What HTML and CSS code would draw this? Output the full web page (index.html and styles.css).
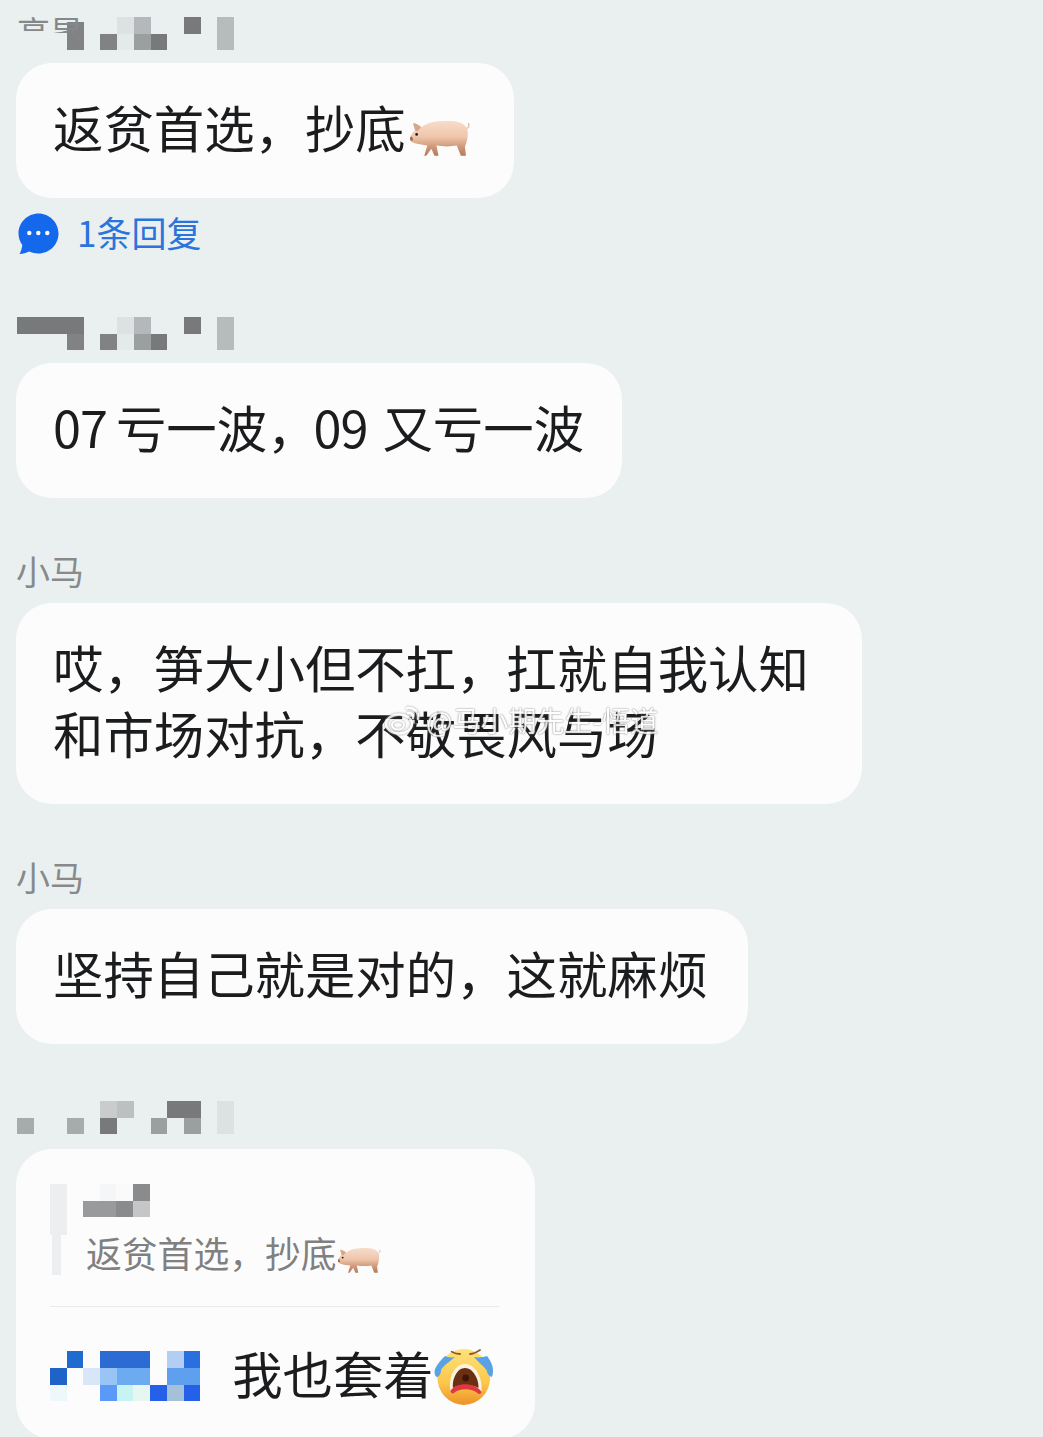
FILE: index.html
```html
<!DOCTYPE html>
<html lang="zh-CN">
<head>
<meta charset="utf-8">
<title>群聊</title>
<link rel="stylesheet" href="styles.css">
</head>
<body>
<svg class="defs" width="0" height="0" aria-hidden="true">
  <defs>
    <linearGradient id="pigBody" x1="0" y1="0" x2="0" y2="1">
      <stop offset="0" stop-color="#f6dcca"/>
      <stop offset=".45" stop-color="#f0c6ac"/>
      <stop offset=".72" stop-color="#d29c7c"/>
      <stop offset="1" stop-color="#b27a5c"/>
    </linearGradient>
    <linearGradient id="faceFill" x1="0" y1="0" x2="0" y2="1">
      <stop offset="0" stop-color="#fde27a"/>
      <stop offset=".6" stop-color="#fbc84c"/>
      <stop offset="1" stop-color="#ee9228"/>
    </linearGradient>
    <symbol id="pig" viewBox="0 0 60 40">
      <path fill="url(#pigBody)" d="M1 19C2 16 4 14 6 12L4 5C7 5 10 7 12 9 17 5 24 3 32 3 42 2 54 3 57 10 59 16 57 24 55 28L56 37 51 37 47 27C42 28 33 28 27 27L29 37 25 37 22 30 17 37 15 37 18 27C14 26 10 26 7 25 4 24 0 23 1 19Z"/>
      <path fill="#d9a58a" d="M4 5C7 5 10 7 12 9L8 13 6 12Z"/>
      <path fill="#9c6248" d="M1 19 3 18 4 22 1.500 22Z"/>
      <circle cx="7.500" cy="16" r="1.300" fill="#221510"/>
      <path fill="none" stroke="#dcb8a2" stroke-width="1.300" d="M57 10C59.500 9 59.500 6 58 5"/>
    </symbol>
  </defs>
</svg>

<main class="feed">
  <section class="msg">
    <div class="mosaic gray">
      <i></i><i></i><i></i><i class="t-cut"></i><i></i><i></i><i class="t-l1"></i><i class="t-m1"></i><i></i><i></i><i class="t-d1"></i><i></i><i class="t-m2"></i>
      <i></i><i></i><i></i><i class="t-d2"></i><i></i><i class="t-d2"></i><i class="t-l2"></i><i class="t-m3"></i><i class="t-d1"></i><i></i><i></i><i></i><i class="t-m2"></i>
      <span class="name-cut">高昇</span>
    </div>
    <div class="bubble b-first">返贫首选，抄底<svg class="pig"><use href="#pig"/></svg></div>
    <div class="replies">
      <svg class="reply-icon" viewBox="0 0 42 42">
        <path fill="#1468ec" d="M20.500.5C31.500.5 40.500 9.500 40.500 20.500S31.500 40.500 20.500 40.500C17 40.500 14 39.800 11 38.500 8 40 5 41 1.500 41 3 38.500 4 35 4.300 32 2 29 .5 25 .5 20.500.5 9.500 9.500.5 20.500.5Z"/>
        <circle cx="11.300" cy="20" r="2.200" fill="#fff"/><circle cx="20.300" cy="20" r="2.200" fill="#fff"/><circle cx="29.300" cy="20" r="2.200" fill="#fff"/>
      </svg>
      <span class="reply-text">1条回复</span>
    </div>
  </section>

  <section class="msg">
    <div class="mosaic gray">
      <i class="t-d1"></i><i class="t-d1"></i><i class="t-d1"></i><i class="t-d1"></i><i></i><i></i><i class="t-l1"></i><i class="t-m1"></i><i></i><i></i><i class="t-d1"></i><i></i><i class="t-m2"></i>
      <i></i><i></i><i></i><i class="t-d2"></i><i></i><i class="t-d2"></i><i class="t-l2"></i><i class="t-m3"></i><i class="t-d1"></i><i></i><i></i><i></i><i class="t-m2"></i>
    </div>
    <div class="bubble b-second"><span class="num">07</span>亏一波，<span class="num num-tight">09</span>又亏一波</div>
  </section>

  <section class="msg">
    <div class="name">小马</div>
    <div class="bubble b-third">哎，笋大小但不扛，扛就自我认知<br>和市场对抗，不敬畏风与场</div>
  </section>

  <section class="msg">
    <div class="name">小马</div>
    <div class="bubble b-fourth">坚持自己就是对的，这就麻烦</div>
  </section>

  <section class="msg msg-last">
    <div class="mosaic gray">
      <i></i><i></i><i></i><i></i><i></i><i class="t-l3"></i><i class="t-m4"></i><i></i><i></i><i class="t-d1"></i><i class="t-d1"></i><i></i><i class="t-l1"></i>
      <i class="t-m5"></i><i></i><i></i><i class="t-m5"></i><i></i><i class="t-d1"></i><i></i><i></i><i class="t-m3"></i><i></i><i class="t-m3"></i><i></i><i class="t-l1"></i>
    </div>
    <div class="bubble b-fifth">
      <div class="quote">
        <div class="quote-bar"><b class="bar-wide"></b><b class="bar-thin"></b></div>
        <div class="quote-body">
          <div class="mosaic mosaic-small">
            <i></i><i class="t-f1"></i><i class="t-f2"></i><i class="t-q1"></i>
            <i class="t-q2"></i><i class="t-q2"></i><i class="t-q1"></i><i class="t-q3"></i>
          </div>
          <div class="quote-text">返贫首选，抄底<svg class="pig pig-small"><use href="#pig"/></svg></div>
        </div>
      </div>
      <div class="sub-reply">
        <div class="mosaic mosaic-blue">
          <i></i><i class="u-1"></i><i></i><i class="u-2"></i><i class="u-2"></i><i class="u-2"></i><i></i><i class="u-3"></i><i class="u-4"></i>
          <i class="u-5"></i><i></i><i class="u-6"></i><i class="u-7"></i><i class="u-8"></i><i class="u-8"></i><i></i><i class="u-9"></i><i class="u-9"></i>
          <i class="u-10"></i><i></i><i></i><i class="u-11"></i><i class="u-12"></i><i class="u-13"></i><i class="u-14"></i><i class="u-15"></i><i class="u-14"></i>
        </div>
        <div class="sub-text">我也套着<svg class="cry" viewBox="0 0 60 60">
          <ellipse cx="29.800" cy="30" rx="26.500" ry="28" fill="url(#faceFill)"/>
          <path fill="none" stroke="#8a5a24" stroke-width="1.800" stroke-linecap="round" d="M17.700 4.700C20 6 23 7 26 7M36 7C39 7 43 5 46 3"/>
          <path fill="#5aa2e6" d="M21 10C17 11 13 10 11 9 7 13 3 17 1 22 0 26 1 29 2.700 30 5 30 7 27 7 23 9 19 14 16 21 10Z"/>
          <path fill="#5aa2e6" d="M40 10C45 11 50 10 53 9 56 13 59 18 59 23 59 26 59 28 57.700 30 55 29 53 27 53 24 50 19 45 16 40 10Z"/>
          <path fill="#fbf3e0" d="M31 17C41 17 49 30 47.500 45 40 38 23 38 16.500 44 14 30 21 17 31 17Z"/>
          <path fill="#6b2f12" d="M31 21C39 21 45 32 44.500 41 38 37 24 37 19 41 18 32 23 21 31 21Z"/>
          <circle cx="31.700" cy="31" r="3.400" fill="#3d1608"/>
          <path fill="#e0363f" d="M16.500 44C22 35 41 35 47.500 45 47 47 45.500 47.500 44 46.500 38 41 25 41 20 46 18.500 47 17 46 16.500 44Z"/>
        </svg></div>
      </div>
    </div>
  </section>
</main>

<div class="watermark">
  <svg class="wm-logo" viewBox="0 0 36 30">
    <ellipse cx="14" cy="19" rx="13" ry="9.500" fill="none" stroke="#fff" stroke-width="2.500"/>
    <ellipse cx="13" cy="20" rx="6" ry="4.500" fill="none" stroke="#fff" stroke-width="2"/>
    <path fill="none" stroke="#fff" stroke-width="2.500" stroke-linecap="round" d="M22 3C29 2 34 7 33 14M23 8C26 7 29 10 28 13"/>
  </svg>
  <span class="wm-text">@马小期先生-悟道</span>
</div>
</body>
</html>
```
FILE: styles.css
```css
* {
  box-sizing: border-box;
}

html,
body {
  margin: 0;
  height: 1437px;
  overflow: hidden;
}

body {
  position: relative;
  background: #eaf0f0;
  color: #1b1c1e;
  font-family: "Noto Sans CJK SC", "Noto Sans", sans-serif;
}

.defs {
  position: absolute;
}

.feed {
  display: flex;
  flex-direction: column;
  gap: 57px;
  padding: 17px 0 0 16px;
}

.msg {
  display: flex;
  flex-direction: column;
  align-items: flex-start;
}

/* Censored names: pixel mosaics */
.mosaic {
  position: relative;
  display: grid;
  grid-template-columns: repeat(13, 16.7px);
  grid-auto-rows: 16.7px;
}

.mosaic i {
  display: block;
}

.gray {
  margin: 0 0 12.6px 1px;
}

.msg-last .gray {
  margin-bottom: 14.6px;
}

.mosaic-small {
  grid-template-columns: repeat(4, 16.7px);
}

.mosaic-blue {
  flex: none;
  margin-top: 11px;
  grid-template-columns: repeat(9, 16.7px);
}

.name-cut {
  position: absolute;
  left: 0;
  top: -2px;
  width: 66px;
  height: 18px;
  overflow: hidden;
  font-size: 33px;
  line-height: 32px;
  color: #85888a;
}

.t-cut { background: linear-gradient(#eaf0f0 0 30%, #808284 30%); }
.t-d1 { background: #77797b; }
.t-d2 { background: #808284; }
.t-l1 { background: #dde1e2; }
.t-l2 { background: #e4e9ea; }
.t-l3 { background: #c9cbcd; }
.t-m1 { background: #b4b8ba; }
.t-m2 { background: #b8bbbc; }
.t-m3 { background: #9c9fa0; }
.t-m4 { background: #bdc0c1; }
.t-m5 { background: #a8abac; }
.t-f1 { background: #f5f6f7; }
.t-f2 { background: #fafafb; }
.t-q1 { background: #8a8b8d; }
.t-q2 { background: #999a9b; }
.t-q3 { background: #c5c6c7; }

.u-1 { background: #1f6bd0; }
.u-2 { background: #2b6bd3; }
.u-3 { background: #b3cdf5; }
.u-4 { background: #2a6fe0; }
.u-5 { background: #1f63c8; }
.u-6 { background: #d8e6f7; }
.u-7 { background: #98c5f5; }
.u-8 { background: #6dabf0; }
.u-9 { background: #5fa0ee; }
.u-10 { background: #eef7fc; }
.u-11 { background: #5b99f8; }
.u-12 { background: #c8f3f5; }
.u-13 { background: #e6f7f0; }
.u-14 { background: #2460e8; }
.u-15 { background: #a6c0d8; }

.name {
  height: 33px;
  margin: 0 0 15px;
  font-size: 34px;
  line-height: 31px;
  color: #88898a;
}

.bubble {
  padding: 31.5px 37px 37.5px;
  border-radius: 36px;
  background: #fcfcfc;
  font-size: 50.4px;
  line-height: 66px;
  white-space: nowrap;
}

.b-first { width: 498px; }
.b-second { width: 606px; }
.b-third { width: 846px; }
.b-fourth { width: 732px; }

.b-fifth {
  width: 519px;
  padding: 35px 36px 32px 34px;
}

.num {
  margin-right: 9px;
  letter-spacing: -1px;
}

.num-tight {
  margin-left: -4px;
  margin-right: 15px;
}

.pig {
  width: 61px;
  height: 41px;
  margin-left: 3px;
  vertical-align: -11px;
}

.pig-small {
  width: 44px;
  height: 29px;
  margin-left: 0;
  vertical-align: -7px;
}

.replies {
  display: flex;
  align-items: center;
  gap: 17px;
  height: 41px;
  margin: 16px 0 5px 2px;
}

.reply-icon {
  width: 42px;
  height: 42px;
}

.reply-text {
  margin-bottom: 5px;
  font-size: 35px;
  line-height: 41px;
  color: #2a74dc;
}

.quote {
  display: flex;
  gap: 16px;
  padding-bottom: 29px;
  border-bottom: 1px solid #e8e9ea;
}

.quote-bar {
  display: flex;
  flex-direction: column;
  width: 17px;
}

.bar-wide {
  width: 17px;
  height: 51px;
  background: #eceeef;
}

.bar-thin {
  width: 9px;
  height: 40px;
  margin-left: 2px;
  background: #eceeef;
}

.quote-text {
  margin: 10px 0 0 3px;
  font-size: 35.800px;
  line-height: 50px;
  color: #808080;
  white-space: nowrap;
}

.sub-reply {
  display: flex;
  align-items: flex-start;
  gap: 32px;
  margin-top: 33px;
}

.sub-text {
  font-size: 50.4px;
  line-height: 66px;
}

.cry {
  width: 60px;
  height: 60px;
  vertical-align: -13px;
}

/* Site watermark over the third bubble */
.watermark {
  position: absolute;
  left: 385px;
  top: 703px;
  display: flex;
  align-items: center;
  gap: 5px;
  opacity: .85;
}

.wm-logo {
  width: 36px;
  height: 30px;
  filter: drop-shadow(0 0 1px #888);
}

.wm-text {
  font-size: 28px;
  line-height: 34px;
  color: #fff;
  text-shadow: 0 0 2px #777, 0 0 1px #999;
  white-space: nowrap;
}
```
